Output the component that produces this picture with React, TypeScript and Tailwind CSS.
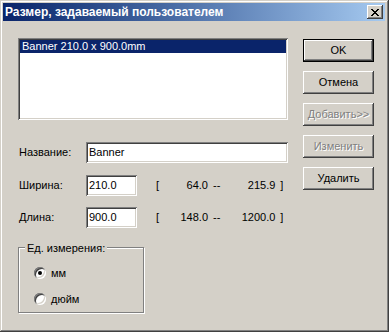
import React from 'react';

const raised =
  'shadow-[inset_-1px_-1px_#404040,inset_1px_1px_#ffffff,inset_-2px_-2px_#808080,inset_2px_2px_#d4d0c8]';
const sunken =
  'shadow-[inset_1px_1px_#808080,inset_-1px_-1px_#ffffff,inset_2px_2px_#404040,inset_-2px_-2px_#d4d0c8]';

function Button({ label, primary, disabled }: { label: string; primary?: boolean; disabled?: boolean }) {
  const frame = primary
    ? 'shadow-[inset_1px_1px_#000000,inset_-1px_-1px_#000000,inset_-2px_-2px_#404040,inset_2px_2px_#ffffff,inset_-3px_-3px_#808080]'
    : raised;
  return (
    <div
      className={`h-[23px] w-[71px] bg-[#d4d0c8] flex items-center justify-center ${frame} ${
        disabled ? 'text-[#808080] [text-shadow:1px_1px_#ffffff]' : 'text-black'
      }`}
    >
      {label}
    </div>
  );
}

function Radio({ checked, label }: { checked?: boolean; label: string }) {
  return (
    <div className="flex items-center h-[12px]">
      <div className={`w-[12px] h-[12px] rounded-full bg-white flex items-center justify-center ${sunken}`}>
        {checked && <div className="w-[4px] h-[4px] rounded-full bg-black" />}
      </div>
      <span className="ml-[5px]">{label}</span>
    </div>
  );
}

function Range({ min, max }: { min: string; max: string }) {
  return (
    <div className="flex items-center ml-[19px] whitespace-nowrap">
      <span className="w-[4px]">[</span>
      <span className="w-[48px] text-right">{min}</span>
      <span className="ml-[5px]">--</span>
      <span className="w-[55px] text-right">{max}</span>
      <span className="ml-[5px]">]</span>
    </div>
  );
}

export default function App() {
  return (
    <div className="w-[389px] h-[332px] bg-[#d4d0c8] p-[3px] font-['Liberation_Sans',Arial,sans-serif] text-[11px] text-black shadow-[inset_-1px_-1px_#404040,inset_1px_1px_#d4d0c8,inset_-2px_-2px_#808080,inset_2px_2px_#ffffff] overflow-hidden">
      {/* Title bar */}
      <div className="h-[18px] w-[382px] flex items-center bg-gradient-to-r from-[#0a246a] to-[#a6caf0]">
        <span className="pl-[2px] text-white font-bold text-[12px] flex-1 whitespace-nowrap">Размер, задаваемый пользователем</span>
        <div className={`w-[16px] h-[14px] mr-[2px] bg-[#d4d0c8] flex items-center justify-center ${raised}`}>
          <svg width="8" height="7" viewBox="0 0 8 7">
            <path d="M0 0h2v1h1v1h2V1h1V0h2v1H7v1H6v1H5v1h1v1h1v1h1v1H6V6H5V5H3v1H2v1H0V6h1V5h1V4h1V3H2V2H1V1H0z" fill="#000" />
          </svg>
        </div>
      </div>

      <div className="flex pl-[15px] pt-[17px]">
        {/* Left column */}
        <div className="w-[270px] flex flex-col">
          <div className={`h-[82px] bg-white p-[2px] ${sunken}`}>
            <div className="h-[13px] bg-[#0a246a] text-white pl-[2px] leading-[13px]">Banner 210.0 x 900.0mm</div>
          </div>

          <div className="mt-[22px] h-[21px] flex items-center">
            <span className="w-[68px] pl-[1px]">Название:</span>
            <div className={`w-[202px] h-[21px] bg-white flex items-center pl-[3px] ${sunken}`}>Banner</div>
          </div>

          <div className="mt-[12px] h-[21px] flex items-center">
            <span className="w-[68px] pl-[1px]">Ширина:</span>
            <div className={`w-[51px] h-[21px] bg-white flex items-center pl-[3px] ${sunken}`}>210.0</div>
            <Range min="64.0" max="215.9" />
          </div>

          <div className="mt-[11px] h-[21px] flex items-center">
            <span className="w-[68px] pl-[1px]">Длина:</span>
            <div className={`w-[51px] h-[21px] bg-white flex items-center pl-[3px] ${sunken}`}>900.0</div>
            <Range min="148.0" max="1200.0" />
          </div>

          <div className="mt-[19px] relative w-[126px] h-[66px] border border-[#808080] shadow-[inset_1px_1px_#ffffff,1px_1px_#ffffff] pl-[15px] pt-[19px]">
            <span className="absolute left-[6px] top-[-8px] px-[2px] bg-[#d4d0c8] whitespace-nowrap">Ед. измерения:</span>
            <Radio checked label="мм" />
            <div className="mt-[14px]">
              <Radio label="дюйм" />
            </div>
          </div>
        </div>

        {/* Buttons */}
        <div className="ml-[15px] mt-[1px] flex flex-col gap-[9px]">
          <Button label="OK" primary />
          <Button label="Отмена" />
          <Button label="Добавить>>" disabled />
          <Button label="Изменить" disabled />
          <Button label="Удалить" />
        </div>
      </div>
    </div>
  );
}
